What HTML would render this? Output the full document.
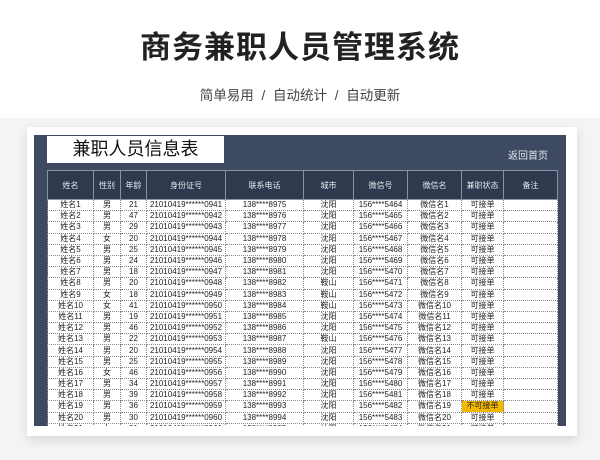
<!DOCTYPE html><html><head><meta charset="utf-8"><style>
body{margin:0;width:600px;height:460px;background:#fff;font-family:"Liberation Sans","Noto Sans CJK SC",sans-serif;position:relative;overflow:hidden}
.t{position:absolute;top:22px;left:0;width:600px;text-align:center;font-size:31px;font-weight:bold;color:#222;letter-spacing:1px}
.s{position:absolute;top:84px;left:0;width:600px;text-align:center;font-size:13.5px;color:#444;word-spacing:4px}
.bg{position:absolute;top:118px;left:0;width:600px;height:342px;background:#f3f4f6}
.card{position:absolute;left:27px;top:127px;width:550px;height:309px;background:#fff;box-shadow:0 4px 10px rgba(0,0,0,.12)}
.dark{position:absolute;left:34px;top:135px;width:532px;height:291px;background:#3e4a61;overflow:hidden}
.tb{position:absolute;left:13px;top:1px;width:177px;height:27px;background:#fff;font-size:18px;color:#111;text-align:center;line-height:27px}
.back{position:absolute;right:18px;top:12px;font-size:10px;color:#e6e8ee}
table{position:absolute;left:13px;top:35px;border-collapse:collapse;table-layout:fixed;font-size:8px}
th{height:26px;background:#2f3a4f;color:#e6e8ee;font-weight:normal;border:1px solid #8a93a3;font-size:8px}
td{height:10.2px;background:#fff;color:#222;border:1px dotted #888;text-align:center;padding:0;line-height:10px;white-space:nowrap}
td.y{background:#f5b800}
</style></head><body>
<div class="bg"></div>
<div class="t">商务兼职人员管理系统</div>
<div class="s">简单易用 / 自动统计 / 自动更新</div>
<div class="card"></div>
<div class="dark">
<div class="tb">兼职人员信息表</div>
<div class="back">返回首页</div>
<table>
<colgroup><col style="width:46px"><col style="width:27px"><col style="width:26px"><col style="width:79px"><col style="width:78px"><col style="width:50px"><col style="width:54px"><col style="width:54px"><col style="width:42px"><col style="width:54px"></colgroup>
<tr><th>姓名</th><th>性别</th><th>年龄</th><th>身份证号</th><th>联系电话</th><th>城市</th><th>微信号</th><th>微信名</th><th>兼职状态</th><th>备注</th></tr>
<tr><td>姓名1</td><td>男</td><td>21</td><td>21010419******0941</td><td>138****8975</td><td>沈阳</td><td>156****5464</td><td>微信名1</td><td>可接单</td><td></td></tr>
<tr><td>姓名2</td><td>男</td><td>47</td><td>21010419******0942</td><td>138****8976</td><td>沈阳</td><td>156****5465</td><td>微信名2</td><td>可接单</td><td></td></tr>
<tr><td>姓名3</td><td>男</td><td>29</td><td>21010419******0943</td><td>138****8977</td><td>沈阳</td><td>156****5466</td><td>微信名3</td><td>可接单</td><td></td></tr>
<tr><td>姓名4</td><td>女</td><td>20</td><td>21010419******0944</td><td>138****8978</td><td>沈阳</td><td>156****5467</td><td>微信名4</td><td>可接单</td><td></td></tr>
<tr><td>姓名5</td><td>男</td><td>25</td><td>21010419******0945</td><td>138****8979</td><td>沈阳</td><td>156****5468</td><td>微信名5</td><td>可接单</td><td></td></tr>
<tr><td>姓名6</td><td>男</td><td>24</td><td>21010419******0946</td><td>138****8980</td><td>沈阳</td><td>156****5469</td><td>微信名6</td><td>可接单</td><td></td></tr>
<tr><td>姓名7</td><td>男</td><td>18</td><td>21010419******0947</td><td>138****8981</td><td>沈阳</td><td>156****5470</td><td>微信名7</td><td>可接单</td><td></td></tr>
<tr><td>姓名8</td><td>男</td><td>20</td><td>21010419******0948</td><td>138****8982</td><td>鞍山</td><td>156****5471</td><td>微信名8</td><td>可接单</td><td></td></tr>
<tr><td>姓名9</td><td>女</td><td>18</td><td>21010419******0949</td><td>138****8983</td><td>鞍山</td><td>156****5472</td><td>微信名9</td><td>可接单</td><td></td></tr>
<tr><td>姓名10</td><td>女</td><td>41</td><td>21010419******0950</td><td>138****8984</td><td>鞍山</td><td>156****5473</td><td>微信名10</td><td>可接单</td><td></td></tr>
<tr><td>姓名11</td><td>男</td><td>19</td><td>21010419******0951</td><td>138****8985</td><td>沈阳</td><td>156****5474</td><td>微信名11</td><td>可接单</td><td></td></tr>
<tr><td>姓名12</td><td>男</td><td>46</td><td>21010419******0952</td><td>138****8986</td><td>沈阳</td><td>156****5475</td><td>微信名12</td><td>可接单</td><td></td></tr>
<tr><td>姓名13</td><td>男</td><td>22</td><td>21010419******0953</td><td>138****8987</td><td>鞍山</td><td>156****5476</td><td>微信名13</td><td>可接单</td><td></td></tr>
<tr><td>姓名14</td><td>男</td><td>20</td><td>21010419******0954</td><td>138****8988</td><td>沈阳</td><td>156****5477</td><td>微信名14</td><td>可接单</td><td></td></tr>
<tr><td>姓名15</td><td>男</td><td>25</td><td>21010419******0955</td><td>138****8989</td><td>沈阳</td><td>156****5478</td><td>微信名15</td><td>可接单</td><td></td></tr>
<tr><td>姓名16</td><td>女</td><td>46</td><td>21010419******0956</td><td>138****8990</td><td>沈阳</td><td>156****5479</td><td>微信名16</td><td>可接单</td><td></td></tr>
<tr><td>姓名17</td><td>男</td><td>34</td><td>21010419******0957</td><td>138****8991</td><td>沈阳</td><td>156****5480</td><td>微信名17</td><td>可接单</td><td></td></tr>
<tr><td>姓名18</td><td>男</td><td>39</td><td>21010419******0958</td><td>138****8992</td><td>沈阳</td><td>156****5481</td><td>微信名18</td><td>可接单</td><td></td></tr>
<tr><td>姓名19</td><td>男</td><td>36</td><td>21010419******0959</td><td>138****8993</td><td>沈阳</td><td>156****5482</td><td>微信名19</td><td class="y">不可接单</td><td></td></tr>
<tr><td>姓名20</td><td>男</td><td>30</td><td>21010419******0960</td><td>138****8994</td><td>沈阳</td><td>156****5483</td><td>微信名20</td><td>可接单</td><td></td></tr>
<tr><td>姓名21</td><td>女</td><td>31</td><td>21010419******0961</td><td>138****8995</td><td>沈阳</td><td>156****5484</td><td>微信名21</td><td>可接单</td><td></td></tr>
</table>
</div>
</body></html>
